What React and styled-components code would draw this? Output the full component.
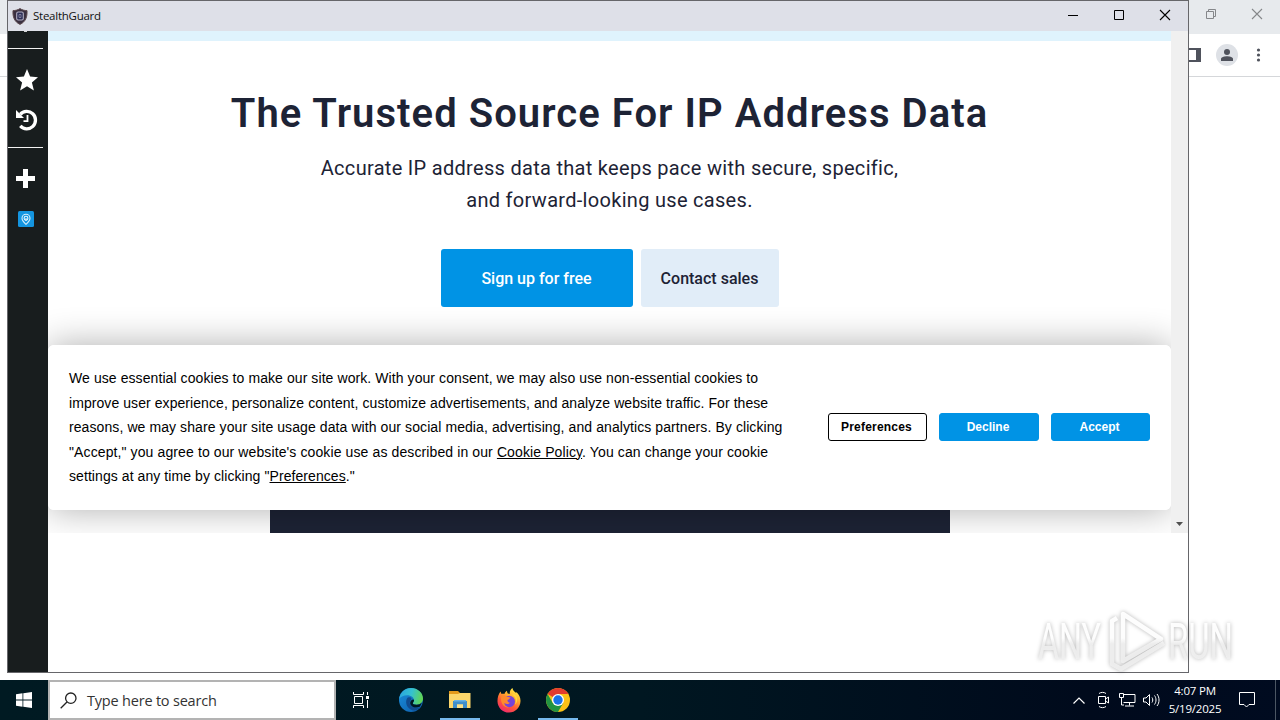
import React from 'react';
import styled, { createGlobalStyle } from 'styled-components';

const GlobalStyle = createGlobalStyle`
    * {
        box-sizing: border-box;
    }
    body {
        margin: 0;
        background: #ffffff;
        overflow: hidden;
    }
`

const Desktop = styled.div`
    position: relative;
    width: 1280px;
    height: 720px;
    display: flex;
    flex-direction: column;
    overflow: hidden;
    font-family: "Open Sans", "Noto Sans", sans-serif;
`

const Browser = styled.div`
    flex: 1;
    display: flex;
    flex-direction: column;
    background: #ffffff;
`

const BrowserTitle = styled.div`
    height: 34px;
    background: #e7eaed;
    display: flex;
    justify-content: flex-end;
    gap: 34px;
    padding: 8px 17px 0 0;
`

const BrowserTools = styled.div`
    height: 43px;
    border-bottom: 1px solid #d5d7da;
    display: flex;
    align-items: center;
    justify-content: flex-end;
    gap: 15px;
    padding-right: 17px;
`

const Avatar = styled.div`
    width: 22px;
    height: 22px;
    border-radius: 50%;
    background: #dee1e6;
    display: flex;
    align-items: center;
    justify-content: center;
`

const Window = styled.div`
    position: absolute;
    left: 7px;
    top: 0;
    width: 1182px;
    height: 673px;
    border: 1px solid #66666a;
    background: #ffffff;
    display: flex;
    flex-direction: column;
`

const TitleBar = styled.div`
    height: 30px;
    background: #dee0e8;
    display: flex;
    align-items: center;
    padding-left: 4px;
    color: #111111;
    font-size: 12px;
`

const AppName = styled.span`
    flex: 1;
    margin-left: 5px;
    line-height: 28px;
    font-size: 11.5px;
    letter-spacing: -0.25px;
`

const Controls = styled.div`
    display: flex;
    gap: 30px;
    padding-right: 15px;
`

const WindowBody = styled.div`
    flex: 1;
    display: flex;
    align-items: flex-start;
`

const Sidebar = styled.div`
    width: 40px;
    height: 641px;
    background: #181d1e;
    color: #ffffff;
    display: flex;
    flex-direction: column;
    overflow: hidden;
`

// bottom tip of the icon that is scrolled out of the sidebar
const ScrolledTip = styled.div`
    width: 3px;
    height: 1px;
    margin-left: 16px;
    background: #d0d2d2;
`

const Divider = styled.div`
    width: 35px;
    height: 1px;
    margin-top: ${props => props.$top}px;
    background: #f2f2f2;
`

const SideItem = styled.div`
    display: flex;
    margin: ${props => props.$top}px 0 0 ${props => props.$left}px;
`

const View = styled.div`
    position: relative;
    flex: 1;
    height: 502px;
    display: flex;
    overflow: hidden;
`

const Page = styled.div`
    flex: 1;
    display: flex;
    flex-direction: column;
    align-items: center;
    color: #1d2335;
    font-family: Roboto, "Liberation Sans", sans-serif;
`

const Band = styled.div`
    width: 100%;
    height: 10px;
    background: #dff3fd;
`

const Title = styled.h1`
    margin: 49px 0 0;
    font-size: 40px;
    line-height: 48px;
    font-weight: 600;
    white-space: nowrap;
    letter-spacing: 1.05px;
`

const Lead = styled.p`
    margin: 14px 0 0;
    font-size: 20px;
    line-height: 32px;
    text-align: center;
`

const Line = styled.span`
    display: block;
    white-space: nowrap;
    letter-spacing: ${props => props.$spacing || 0}px;
`

const Actions = styled.div`
    display: flex;
    gap: 8px;
    margin-top: 33px;
`

const ActionButton = styled.button`
    width: ${props => props.$width}px;
    height: 58px;
    border: none;
    border-radius: 3px;
    padding: 0;
    background: ${props => props.$primary ? '#0093e5' : '#e1edf8'};
    color: ${props => props.$primary ? '#ffffff' : '#1d2335'};
    font-family: inherit;
    font-size: 16px;
    font-weight: 500;
`

const Panel = styled.div`
    width: 680px;
    flex: 1;
    margin-top: 60px;
    background: #1d2335;
`

const Scrollbar = styled.div`
    position: relative;
    z-index: 2;
    width: 17px;
    background: #f0f0f0;
    display: flex;
    align-items: flex-end;
    justify-content: center;
    padding-bottom: 7px;
`

const Cookie = styled.div`
    position: absolute;
    left: 0;
    top: 314px;
    z-index: 3;
    width: 1123px;
    height: 165px;
    border-radius: 6px;
    background: #ffffff;
    display: flex;
    align-items: center;
    justify-content: space-between;
    padding: 0 21px;
    font-family: "Liberation Sans", Arial, sans-serif;
    color: #000000;
`

// the shadow stays under the scrollbar
const CookieShadow = styled.div`
    position: absolute;
    left: 0;
    top: 314px;
    z-index: 1;
    width: 1123px;
    height: 165px;
    border-radius: 6px;
    box-shadow: 0 0 36px rgba(0, 0, 0, 0.32);
`

const CookieText = styled.div`
    font-size: 14px;
    line-height: 24.5px;
    u {
        text-underline-offset: 1px;
    }
`

const CookieButtons = styled.div`
    display: flex;
    gap: 12px;
    margin-bottom: 1px;
`

const CookieButton = styled.button`
    width: ${props => props.$width}px;
    height: 28px;
    border: 1px solid ${props => props.$outline ? '#000000' : '#0093e5'};
    border-radius: 3px;
    padding: 0 2px 0 0;
    background: ${props => props.$outline ? '#ffffff' : '#0093e5'};
    color: ${props => props.$outline ? '#000000' : '#ffffff'};
    font-family: inherit;
    font-size: 12px;
    font-weight: bold;
    letter-spacing: ${props => props.$spacing || 0}px;
`

const Watermark = styled.svg`
    position: absolute;
    left: 1030px;
    top: 604px;
    filter: drop-shadow(0 0 2px rgba(0, 0, 0, 0.3));
`

const Taskbar = styled.div`
    position: relative;
    height: 40px;
    background: linear-gradient(90deg, #001a22 0%, #001721 50%, #000a1c 85%, #000b20 100%);
    display: flex;
    color: #ffffff;
`

const StartButton = styled.div`
    width: 48px;
    display: flex;
    align-items: center;
    justify-content: center;
`

const Search = styled.div`
    width: 288px;
    border: 2px solid #b3b3b3;
    background: #ffffff;
    color: #333333;
    display: flex;
    align-items: center;
    padding-left: 10px;
    font-size: 14.5px;
`

const SearchText = styled.span`
    margin-left: 10px;
    letter-spacing: -0.2px;
`

const Task = styled.div`
    width: ${props => props.$width || 49}px;
    display: flex;
    align-items: center;
    justify-content: center;
    background: ${props => props.$open ? 'linear-gradient(#76b9ed, #76b9ed) 50% 100% / 40px 2px no-repeat' : 'none'};
`

const Tray = styled.div`
    flex: 1;
    display: flex;
    align-items: center;
    justify-content: flex-end;
`

const TrayIcon = styled.div`
    display: flex;
    margin-right: ${props => props.$right}px;
`

const Clock = styled.div`
    width: 60px;
    margin-right: 14px;
    text-align: center;
    font-size: 11.5px;
    line-height: 18px;
    letter-spacing: -0.2px;
    padding-bottom: 1px;
`

const ShowDesktop = styled.div`
    width: 5px;
    height: 40px;
    border-left: 1px solid #4b5663;
`

const ShieldIcon = () => (
    <svg width="16" height="17" viewBox="0 0 16 17">
        <path d="M8 .6C5.800 2 3.400 2.600 1 2.600c-.3 6 1 11 7 13.800 6-2.800 7.300-7.800 7-13.800C12.600 2.600 10.200 2 8 .6z" fill="#3a3040" stroke="#5d4a4e" strokeWidth="1" />
        <rect x="4.700" y="4" width="6.600" height="8" rx="1.500" fill="#2b2e55" stroke="#b3afc4" strokeWidth="1.100" />
        <path d="M7 6.500h2v3H7z" fill="none" stroke="#8f8ca8" strokeWidth=".8" />
    </svg>
)

const StarIcon = () => (
    <svg width="22" height="22" viewBox="0 0 22 22" fill="#ffffff">
        <path d="M11 0l3.100 7.600 7.900.6-6.100 5.200 2 8.100L11 17.200l-6.900 4.300 2-8.100L0 8.200l7.900-.6z" />
    </svg>
)

const HistoryIcon = () => (
    <svg width="22" height="22" viewBox="0 0 22 22">
        <path d="M4.200 5.400A8.700 8.700 0 1 1 4.300 16.900" fill="none" stroke="#ffffff" strokeWidth="3.300" />
        <path d="M0 1l8 8H0z" fill="#ffffff" />
        <path d="M11.500 6v6.200H7.500" fill="none" stroke="#ffffff" strokeWidth="1.800" />
    </svg>
)

const PinIcon = () => (
    <svg width="16" height="16" viewBox="0 0 16 16">
        <rect width="16" height="16" rx="1.500" fill="#1495e0" />
        <path d="M8 13.300C5.500 11 4 9.300 4 7.200a4 4 0 0 1 8 0c0 2.100-1.500 3.800-4 6.100z" fill="none" stroke="#d6effc" strokeWidth="1.100" />
        <circle cx="8" cy="7.200" r="1.900" fill="none" stroke="#e8f7ff" strokeWidth="1.100" />
        <path d="M8 7v3" stroke="#e8f7ff" strokeWidth="1" />
    </svg>
)

const EdgeIcon = () => (
    <svg width="26" height="26" viewBox="0 0 26 26">
        <defs>
            <linearGradient id="edgeTop" x1="0" y1=".3" x2="1" y2=".5">
                <stop offset="0" stopColor="#2aa5df" />
                <stop offset=".5" stopColor="#35c1d0" />
                <stop offset="1" stopColor="#62d64f" />
            </linearGradient>
            <linearGradient id="edgeLow" x1="0" y1="0" x2="1" y2="1">
                <stop offset="0" stopColor="#1b8fdc" />
                <stop offset="1" stopColor="#0c5ba9" />
            </linearGradient>
        </defs>
        <circle cx="13" cy="13" r="12" fill="url(#edgeLow)" />
        <path d="M1.200 11.800C2 5.600 6.800 1 13 1c7 0 12 5 12 10.600 0 3.900-3 6.200-6.300 6.200-2.900 0-4.500-1-3.700-2 .7-.9 1-1.500 1-2.500 0-2.500-2.800-5-6.800-5-3.500 0-6.300 1.200-8 3.500z" fill="url(#edgeTop)" />
        <path d="M9.500 10.700c-2.500 3.300-1.600 9 3.200 11.800 3.300 1.900 7.300.9 10.200-2.400-3 1.500-6.600 1.300-9-.5-2.600-2-2.800-4.600-1-6.500 1.200-1.200.6-3.800-3.400-2.400z" fill="#114b8e" />
        <path d="M16 13.300c0 1-.3 1.600-1 2.500-.8 1 .8 2 3.700 2 2 0 3.900-.8 5-2.200-.5 1.800-1 3-2 4.200-3 1.300-6 1-8-.7-2-1.700-2-4-.5-5.600 1-1 2.800-1.500 2.800-.2z" fill="#001721" />
    </svg>
)

const FolderIcon = () => (
    <svg width="22" height="20" viewBox="0 0 22 20">
        <path d="M0 1h9l2 2h10v3H0z" fill="#e39a1c" />
        <path d="M0 4h9l2-1h10.500v15H0z" fill="#fbd66b" />
        <path d="M4 18v-7h14v7h-4v-3.500H8V18z" fill="#3f8ecb" />
        <path d="M5 10h12v1.500H5z" fill="#68b2e6" />
        <path d="M8 14.500h6V18H8z" fill="#fbe08a" />
    </svg>
)

const FirefoxIcon = () => (
    <svg width="24" height="25" viewBox="0 0 24 25">
        <defs>
            <linearGradient id="fox" x1=".8" y1="0" x2=".25" y2="1">
                <stop offset="0" stopColor="#fff14a" />
                <stop offset=".35" stopColor="#ffb02e" />
                <stop offset=".65" stopColor="#ff5a36" />
                <stop offset="1" stopColor="#f0266f" />
            </linearGradient>
        </defs>
        <path d="M3.500 3.500c.2 1 .6 1.800 1.100 2.400.9-.3 1.900-.3 2.800 0C8 4.300 9 3.200 10 2.700c-.1 1 .2 1.900.8 2.700l2 .6c-.3-2.200.6-4.800 2.700-6 .2 2.300 1.700 3.200 3.400 4.700l.7-.4C22 6.500 23.600 9.700 23.500 13 23.300 19.600 18.300 24.500 12 24.500S.7 19.600.5 13.400C.4 9.500 1.500 6 3.500 3.500z" fill="url(#fox)" />
        <circle cx="12.300" cy="13.500" r="5.700" fill="#7544d8" />
        <path d="M4.500 8c2-.8 4-.3 5.200.8 1.200.2 2.700.2 3.700.8-.2 1.400-2.400 1.600-3 2.600.1 1.500 1 2.300 2.600 2.600-1.500 1.700-3.800 1.500-5.500.2C7 17 9 19 12 19.400 6.800 20.500 2.500 14 4.500 8z" fill="#ff8a2c" />
        <path d="M15 6.500c3.600 1.500 5 6 3 10 3-2 3-8-.5-10.300z" fill="#ffd83c" />
    </svg>
)

const ChromeIcon = () => (
    <svg width="24" height="24" viewBox="0 0 24 24">
        <circle cx="12" cy="12" r="12" fill="#fbc116" />
        <path d="M1.610 6A12 12 0 0 1 22.390 6H12v6z" fill="#e33b2e" />
        <path d="M1.610 6A12 12 0 0 0 12 24l5.200-9H12L6.800 15z" fill="#229342" />
        <circle cx="12" cy="12" r="6" fill="#ffffff" />
        <circle cx="12" cy="12" r="4.700" fill="#1a73e8" />
    </svg>
)

const App = () => {
    return (
        <Desktop>
            <GlobalStyle />
            <Browser>
                <BrowserTitle>
                    <svg width="12" height="12" viewBox="0 0 12 12" fill="none" stroke="#85878a" strokeWidth="1">
                        <path d="M1.500 3.500h7v7h-7zM3.500 3.500v-2h7v7h-2" />
                    </svg>
                    <svg width="12" height="12" viewBox="0 0 12 12" stroke="#85878a" strokeWidth="1.100">
                        <path d="M1 1l10 10M11 1L1 11" />
                    </svg>
                </BrowserTitle>
                <BrowserTools>
                    <svg width="16" height="14" viewBox="0 0 16 14">
                        <path d="M1 1h14v12H1z" fill="none" stroke="#4f525c" strokeWidth="2" />
                        <path d="M11 1h5v12h-5z" fill="#4f525c" />
                    </svg>
                    <Avatar>
                        <svg width="12" height="12" viewBox="0 0 12 12" fill="#4f525c">
                            <circle cx="6" cy="3" r="3" />
                            <path d="M0 12v-2c0-2 3.500-2.800 6-2.800s6 .8 6 2.800v2z" />
                        </svg>
                    </Avatar>
                    <svg width="10" height="14" viewBox="0 0 10 14" fill="#4f525c">
                        <circle cx="5.500" cy="2" r="1.600" />
                        <circle cx="5.500" cy="7" r="1.600" />
                        <circle cx="5.500" cy="12" r="1.600" />
                    </svg>
                </BrowserTools>
            </Browser>

            <Window>
                <TitleBar>
                    <ShieldIcon />
                    <AppName>StealthGuard</AppName>
                    <Controls>
                        <svg width="16" height="16" viewBox="0 0 16 16" stroke="#000000"><path d="M3 7.500h10" /></svg>
                        <svg width="16" height="16" viewBox="0 0 16 16" stroke="#000000" fill="none"><path d="M3.500 2.500h9v9h-9z" /></svg>
                        <svg width="16" height="16" viewBox="0 0 16 16" stroke="#000000" strokeWidth="1.100"><path d="M3 2l10 10M13 2L3 12" /></svg>
                    </Controls>
                </TitleBar>
                <WindowBody>
                    <Sidebar>
                        <ScrolledTip />
                        <Divider $top={16} />
                        <SideItem $top={20} $left={8}><StarIcon /></SideItem>
                        <SideItem $top={18} $left={8}><HistoryIcon /></SideItem>
                        <Divider $top={16} />
                        <SideItem $top={21} $left={8}>
                            <svg width="19" height="19" viewBox="0 0 19 19" fill="#ffffff"><path d="M7 0h5v7h7v5h-7v7H7v-7H0V7h7z" /></svg>
                        </SideItem>
                        <SideItem $top={23} $left={10}><PinIcon /></SideItem>
                    </Sidebar>
                    <View>
                        <Page>
                            <Band />
                            <Title>The Trusted Source For IP Address Data</Title>
                            <Lead>
                                <Line $spacing={0.3}>Accurate IP address data that keeps pace with secure, specific,</Line>
                                <Line $spacing={0.3}>and forward-looking use cases.</Line>
                            </Lead>
                            <Actions>
                                <ActionButton $primary $width={192}>Sign up for free</ActionButton>
                                <ActionButton $width={138}>Contact sales</ActionButton>
                            </Actions>
                            <Panel />
                        </Page>
                        <Scrollbar>
                            <svg width="7" height="4" viewBox="0 0 7 4"><path d="M0 0h7L3.500 4z" fill="#505050" /></svg>
                        </Scrollbar>
                        <CookieShadow />
                        <Cookie>
                            <CookieText>
                                <Line $spacing={0.08}>We use essential cookies to make our site work. With your consent, we may also use non-essential cookies to</Line>
                                <Line $spacing={0.07}>improve user experience, personalize content, customize advertisements, and analyze website traffic. For these</Line>
                                <Line $spacing={0.088}>reasons, we may share your site usage data with our social media, advertising, and analytics partners. By clicking</Line>
                                <Line $spacing={0.11}>"Accept," you agree to our website's cookie use as described in our <u>Cookie Policy</u>. You can change your cookie</Line>
                                <Line $spacing={0.075}>settings at any time by clicking "<u>Preferences</u>."</Line>
                            </CookieText>
                            <CookieButtons>
                                <CookieButton $outline $width={99} $spacing={0.2}>Preferences</CookieButton>
                                <CookieButton $width={100}>Decline</CookieButton>
                                <CookieButton $width={99}>Accept</CookieButton>
                            </CookieButtons>
                        </Cookie>
                    </View>
                </WindowBody>
            </Window>

            <Watermark width="250" height="74" viewBox="0 0 250 74">
                <defs>
                    <linearGradient id="mark" gradientUnits="userSpaceOnUse" x1="0" y1="34" x2="0" y2="40">
                        <stop offset="0" stopColor="#ffffff" stopOpacity=".95" />
                        <stop offset="1" stopColor="#f0f0f0" stopOpacity=".9" />
                    </linearGradient>
                </defs>
                <g fill="url(#mark)" fontFamily="Roboto, sans-serif" fontSize="50">
                    <text x="8" y="55" textLength="63" lengthAdjust="spacingAndGlyphs">ANY</text>
                    <text x="138" y="55" textLength="65" lengthAdjust="spacingAndGlyphs">RUN</text>
                </g>
                <path d="M87 14l-5 3v43l9 5 43-26M93 10v47l38-22z" fill="none" stroke="url(#mark)" strokeWidth="4.500" strokeLinejoin="round" />
            </Watermark>

            <Taskbar>
                <StartButton>
                    <svg width="16" height="16" viewBox="0 0 16 16" fill="#ffffff">
                        <path d="M0 2.200l6.500-.9v6.200H0zM7.300 1.200L16 0v7.500H7.300zM0 8.400h6.500v6.300L0 13.800zM7.300 8.400H16V16l-8.700-1.200z" />
                    </svg>
                </StartButton>
                <Search>
                    <svg width="17" height="17" viewBox="0 0 17 17" fill="none" stroke="#222222" strokeWidth="1.300">
                        <circle cx="10.800" cy="6.200" r="5.200" />
                        <path d="M7 10L.7 16.300" />
                    </svg>
                    <SearchText>Type here to search</SearchText>
                </Search>
                <Task $width={50}>
                    <svg width="17" height="16" viewBox="0 0 17 16" fill="none" stroke="#ffffff">
                        <path d="M.5 0v2.500h10V0M.5 16v-2.500h10V16M1.500 4.500h8v7h-8zM14.500 0v3M14.500 8v8" />
                        <path d="M13 4h3v3h-3z" fill="#ffffff" stroke="none" />
                    </svg>
                </Task>
                <Task><EdgeIcon /></Task>
                <Task $open><FolderIcon /></Task>
                <Task><FirefoxIcon /></Task>
                <Task $open><ChromeIcon /></Task>
                <Tray>
                    <TrayIcon $right={12}>
                        <svg width="12" height="7" viewBox="0 0 12 7" fill="none" stroke="#ffffff" strokeWidth="1.200"><path d="M.5 6.500L6 1l5.500 5.500" /></svg>
                    </TrayIcon>
                    <TrayIcon $right={10}>
                        <svg width="12" height="18" viewBox="0 0 12 18" fill="none" stroke="#ffffff">
                            <path d="M1.500 5.500h7v7h-7zM8.500 8l3-2v6l-3-2M2 2.500c2-1.500 5-1.500 7 0M2 15.500c2 1.500 5 1.500 7 0" />
                        </svg>
                    </TrayIcon>
                    <TrayIcon $right={7}>
                        <svg width="17" height="14" viewBox="0 0 17 14" fill="none" stroke="#ffffff">
                            <path d="M5 1.500h11v8H4.500M10.500 9.500v3M6 13h9M.5.5h4v4h-4zM2.500 4.500V12H5" />
                        </svg>
                    </TrayIcon>
                    <TrayIcon $right={5}>
                        <svg width="17" height="14" viewBox="0 0 17 14" fill="none" stroke="#ffffff">
                            <path d="M.5 5h2.500l3.500-3.500v11L3 9H.5zM9 4.500c1 1.500 1 3.500 0 5M11.500 2.500c2 2.500 2 6.500 0 9M14 1c2.700 3.500 2.700 8.500 0 12" />
                        </svg>
                    </TrayIcon>
                    <Clock>
                        <div>4:07 PM</div>
                        <div>5/19/2025</div>
                    </Clock>
                    <TrayIcon $right={20}>
                        <svg width="16" height="16" viewBox="0 0 16 16" fill="none" stroke="#ffffff"><path d="M.5.5h15v12H10l-2.500 2.500L5 12.500H.5z" /></svg>
                    </TrayIcon>
                    <ShowDesktop />
                </Tray>
            </Taskbar>
        </Desktop>
    )
}

export default App;
